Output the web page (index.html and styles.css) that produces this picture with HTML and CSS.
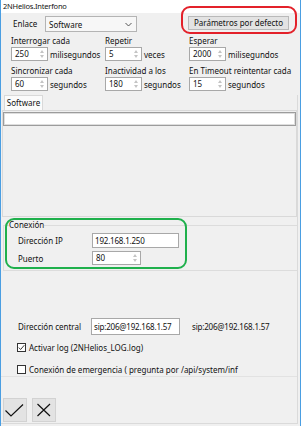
FILE: index.html
```html
<!DOCTYPE html>
<html lang="es">
<head>
<meta charset="UTF-8">
<title>2NHelios.Interfono</title>
<link rel="stylesheet" href="styles.css">
</head>
<body>
<div class="window">
    <div class="titlebar">2NHelios.Interfono</div>

    <div class="row-link">
        <span class="lbl-link">Enlace</span>
        <div class="select">
            <span>Software</span>
            <svg class="chev" width="7" height="5" viewBox="0 0 7 5"><polyline points="0.5,1 3.5,4 6.5,1" fill="none" stroke="#444" stroke-width="0.9"/></svg>
        </div>
        <div class="btn-defaults">Parámetros por defecto</div>
    </div>

    <div class="fields">
        <div class="field">
            <div class="flabel">Interrogar cada</div>
            <div class="frow"><div class="spin"><span>250</span><i class="arrows"></i></div><span class="unit">milisegundos</span></div>
        </div>
        <div class="field">
            <div class="flabel">Repetir</div>
            <div class="frow"><div class="spin"><span>5</span><i class="arrows"></i></div><span class="unit">veces</span></div>
        </div>
        <div class="field">
            <div class="flabel">Esperar</div>
            <div class="frow"><div class="spin"><span>2000</span><i class="arrows"></i></div><span class="unit">milisegundos</span></div>
        </div>
        <div class="field">
            <div class="flabel">Sincronizar cada</div>
            <div class="frow"><div class="spin"><span>60</span><i class="arrows"></i></div><span class="unit">segundos</span></div>
        </div>
        <div class="field">
            <div class="flabel">Inactividad a los</div>
            <div class="frow"><div class="spin"><span>180</span><i class="arrows"></i></div><span class="unit">segundos</span></div>
        </div>
        <div class="field">
            <div class="flabel">En Timeout reintentar cada</div>
            <div class="frow"><div class="spin"><span>15</span><i class="arrows"></i></div><span class="unit">segundos</span></div>
        </div>
    </div>

    <div class="content">
        <div class="tab">Software</div>
        <div class="tab-panel">
            <div class="wide-input"></div>
        </div>

        <fieldset class="group">
            <legend>Conexión</legend>
            <div class="grow">
                <span class="glabel">Dirección IP</span>
                <div class="text ip">192.168.1.250</div>
            </div>
            <div class="grow">
                <span class="glabel">Puerto</span>
                <div class="spin port"><span>80</span><i class="arrows"></i></div>
            </div>
        </fieldset>

        <div class="lower">
            <div class="central">
                <span class="clabel">Dirección central</span>
                <div class="text sip">sip:206@192.168.1.57</div>
                <span class="sip-value">sip:206@192.168.1.57</span>
            </div>
            <div class="check first">
                <span class="box"><svg width="9" height="9" viewBox="0 0 9 9"><polyline points="1.8,4.6 3.6,6.5 7.3,2.2" fill="none" stroke="#222" stroke-width="0.9"/></svg></span>
                <span>Activar log (2NHelios_LOG.log)</span>
            </div>
            <div class="check">
                <span class="box"></span>
                <span>Conexión de emergencia ( pregunta por /api/system/inf</span>
            </div>
        </div>

        <div class="footer">
            <div class="tool"><svg width="24" height="24" viewBox="0 0 24 24"><polyline points="2.5,12.5 8,18 20,6.5" fill="none" stroke="#111" stroke-width="1.2"/></svg></div>
            <div class="tool"><svg width="24" height="24" viewBox="0 0 24 24"><path d="M5.5 6 L18 18 M18 6 L5.5 18" fill="none" stroke="#111" stroke-width="1.2"/></svg></div>
        </div>
    </div>

    <!-- annotations drawn over the window -->
    <div class="mark mark-red"></div>
    <div class="mark mark-green"></div>
</div>
</body>
</html>
```

FILE: styles.css
```css
body {
    margin: 0;
    font-family: "Noto Sans", "Open Sans", sans-serif;
    font-size: 8px;
    color: #111;
}
.window {
    position: relative;
    width: 301px;
    height: 426px;
    box-sizing: border-box;
    border-left: 1px solid #4a9ee2;
    border-right: 1px solid #4a9ee2;
    background: #f0f0f0;
    overflow: hidden;
}
.titlebar {
    height: 13px;
    line-height: 13px;
    background: #fff;
    padding-left: 2px;
    font-size: 7.5px;
    letter-spacing: -0.2px;
}

/* first row */
.row-link {
    display: flex;
    align-items: flex-start;
    margin-top: 3px;
    height: 16px;
}
.lbl-link {
    width: 32px;
    margin-left: 12px;
    line-height: 16px;
}
.select {
    width: 92px;
    height: 16px;
    box-sizing: border-box;
    border: 1px solid #b4b4b4;
    background: #f7f7f7;
    display: flex;
    align-items: center;
    justify-content: space-between;
    padding: 0 4px 0 3px;
}
.btn-defaults {
    margin-left: 51px;
    width: 101px;
    height: 14px;
    box-sizing: border-box;
    border: 1px solid #b9b9b9;
    background: #e3e3e3;
    text-align: center;
    line-height: 12px;
}

/* numeric fields */
.fields {
    display: grid;
    grid-template-columns: 94px 84px auto;
    row-gap: 4px;
    padding-left: 10px;
    margin-top: 3px;
}
.flabel {
    height: 11px;
    line-height: 11px;
    margin-bottom: 1px;
    white-space: nowrap;
}
.frow {
    display: flex;
    align-items: center;
}
.spin {
    position: relative;
    width: 37px;
    height: 14px;
    box-sizing: border-box;
    border: 1px solid #a8a8a8;
    background: #fff;
    padding-left: 3px;
    line-height: 12px;
}
.arrows {
    position: absolute;
    right: 2px;
    top: 2px;
    width: 5px;
    height: 8px;
}
.arrows::before,
.arrows::after {
    content: "";
    position: absolute;
    left: 0;
    border-left: 2.5px solid transparent;
    border-right: 2.5px solid transparent;
}
.arrows::before {
    top: 0;
    border-bottom: 3px solid #c4c4c4;
}
.arrows::after {
    bottom: 0;
    border-top: 3px solid #c4c4c4;
}
.unit {
    margin-left: 2px;
}

/* lower part */
.content {
    margin-top: 4px;
    margin-right: 2px;
    height: 329px;
    box-sizing: border-box;
    border-right: 1px solid #dadada;
    border-bottom: 1px solid #dadada;
}
.tab {
    margin-left: 3px;
    width: 39px;
    height: 15px;
    box-sizing: border-box;
    border: 1px solid #d9d9d9;
    border-bottom: none;
    background: #fbfbfb;
    text-align: center;
    line-height: 14px;
}
.tab-panel {
    margin-left: 1px;
    height: 107px;
    box-sizing: border-box;
    border: 1px solid #d9d9d9;
}
.wide-input {
    margin-top: 1px;
    height: 14px;
    box-sizing: border-box;
    border: 1px solid #9c9c9c;
    box-shadow: inset 0 0 0 1px #dedede;
    background: #fff;
}

.group {
    margin: 3px 0 0 2px;
    padding: 0 0 5px 5px;
    border: 1px solid #dcdcdc;
    border-right: none;
    min-width: 0;
}
.group legend {
    padding: 0;
    line-height: 10px;
}
.grow {
    display: flex;
    align-items: center;
    margin-top: 3px;
}
.glabel {
    width: 74px;
    margin-left: 9px;
}
.text {
    height: 15px;
    box-sizing: border-box;
    border: 1px solid #a8a8a8;
    background: #fff;
    padding-left: 2px;
    line-height: 13px;
    letter-spacing: -0.2px;
}
.ip {
    width: 87px;
}
.port {
    width: 49px;
}

.lower {
    height: 106px;
    box-sizing: border-box;
    border-bottom: 1px solid #e2e2e2;
    padding-top: 47px;
}
.central {
    display: flex;
    align-items: center;
}
.clabel {
    width: 73px;
    margin-left: 17px;
}
.sip {
    width: 89px;
    height: 17px;
    line-height: 15px;
}
.sip-value {
    margin-left: 12px;
    letter-spacing: -0.2px;
}
.check {
    display: flex;
    align-items: center;
    margin-top: 10px;
    margin-left: 16px;
    height: 12px;
    white-space: nowrap;
}
.check.first {
    margin-top: 6px;
}
.box {
    width: 9px;
    height: 9px;
    box-sizing: border-box;
    border: 1px solid #333;
    background: #fff;
    margin-right: 3px;
    display: flex;
}
.box svg {
    margin: -1px;
}

.footer {
    display: flex;
    gap: 5px;
    padding: 21px 0 0 2px;
}
.tool {
    width: 24px;
    height: 24px;
    box-sizing: border-box;
    border: 1px solid #d2d2d2;
    background: #e3e3e3;
}
.tool svg {
    margin: -1px;
}

/* highlight annotations */
.mark {
    position: absolute;
    box-sizing: border-box;
    border-width: 2px;
    border-style: solid;
    border-radius: 9px;
}
.mark-red {
    left: 180px;
    top: 6px;
    width: 116px;
    height: 28px;
    border-color: #e3212a;
}
.mark-green {
    left: 4px;
    top: 218px;
    width: 182px;
    height: 51px;
    border-color: #1fb04c;
}
```
